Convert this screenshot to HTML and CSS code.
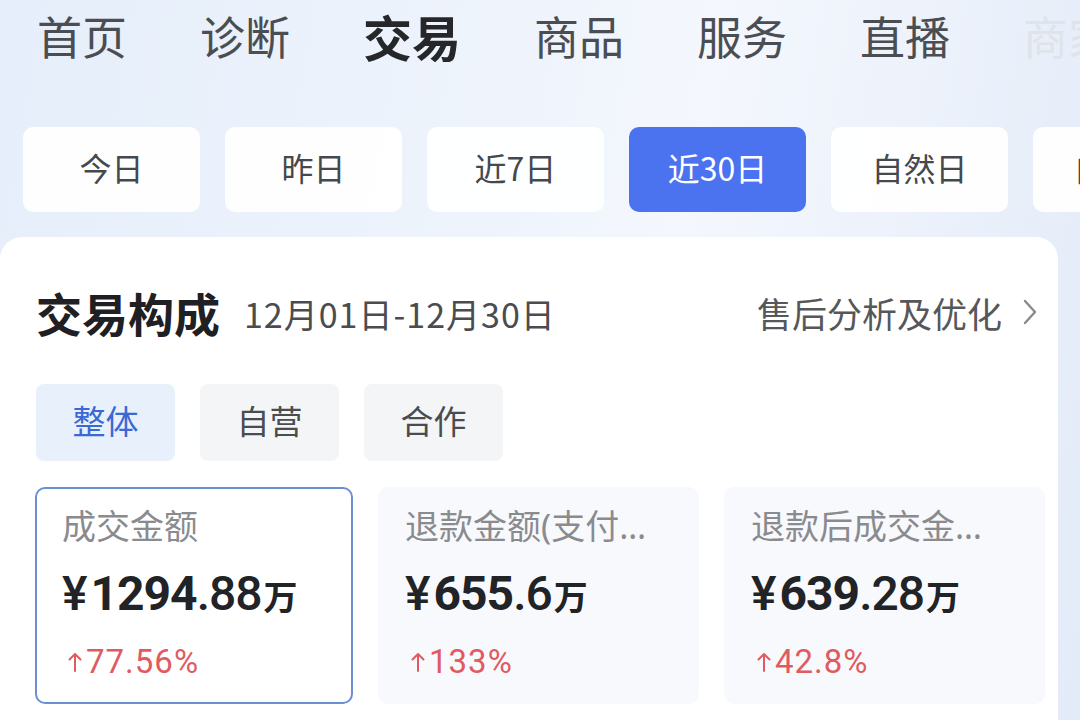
FILE: index.html
```html
<!DOCTYPE html>
<html lang="zh-CN">
<head>
    <meta charset="UTF-8">
    <meta name="viewport" content="width=device-width, initial-scale=1.0">
    <title>交易</title>
    <link rel="stylesheet" href="styles.css">
</head>
<body>
    <div class="page">
        <nav class="tabs">
            <span class="tab">首页</span>
            <span class="tab">诊断</span>
            <span class="tab active">交易</span>
            <span class="tab">商品</span>
            <span class="tab">服务</span>
            <span class="tab">直播</span>
            <span class="tab faded">商家</span>
        </nav>

        <div class="chips">
            <span class="chip">今日</span>
            <span class="chip">昨日</span>
            <span class="chip">近7日</span>
            <span class="chip selected">近30日</span>
            <span class="chip">自然日</span>
            <span class="chip">自定义</span>
        </div>

        <section class="card">
            <div class="card-header">
                <h2 class="card-title">交易构成</h2>
                <span class="card-date">12月01日-12月30日</span>
                <a class="card-link">售后分析及优化
                    <svg class="chevron" viewBox="0 0 16 28" width="16" height="28">
                        <path d="M3 3 L13 14 L3 25" fill="none" stroke="#8a8a8a" stroke-width="2.4" stroke-linecap="round" stroke-linejoin="round"/>
                    </svg>
                </a>
            </div>

            <div class="segments">
                <span class="segment current">整体</span>
                <span class="segment">自营</span>
                <span class="segment">合作</span>
            </div>

            <div class="metrics">
                <div class="metric focus">
                    <div class="metric-label">成交金额</div>
                    <div class="metric-value">¥<b>1294</b>.88<small>万</small></div>
                    <div class="metric-rate"><svg class="arrow" viewBox="0 0 14 20" width="14" height="20"><path d="M7 19 V2 M1.5 7.5 L7 2 L12.5 7.5" fill="none" stroke="#e05b61" stroke-width="2" stroke-linecap="round" stroke-linejoin="round"/></svg>77.56%</div>
                </div>
                <div class="metric">
                    <div class="metric-label">退款金额(支付时间)</div>
                    <div class="metric-value">¥<b>655</b>.6<small>万</small></div>
                    <div class="metric-rate"><svg class="arrow" viewBox="0 0 14 20" width="14" height="20"><path d="M7 19 V2 M1.5 7.5 L7 2 L12.5 7.5" fill="none" stroke="#e05b61" stroke-width="2" stroke-linecap="round" stroke-linejoin="round"/></svg>133%</div>
                </div>
                <div class="metric">
                    <div class="metric-label">退款后成交金额(支付时间)</div>
                    <div class="metric-value">¥<b>639</b>.28<small>万</small></div>
                    <div class="metric-rate"><svg class="arrow" viewBox="0 0 14 20" width="14" height="20"><path d="M7 19 V2 M1.5 7.5 L7 2 L12.5 7.5" fill="none" stroke="#e05b61" stroke-width="2" stroke-linecap="round" stroke-linejoin="round"/></svg>42.8%</div>
                </div>
            </div>
        </section>
    </div>
</body>
</html>
```

FILE: styles.css
```css
body {
    margin: 0;
    padding: 0;
    width: 1080px;
    height: 720px;
    overflow: hidden;
    font-family: "Noto Sans CJK SC", "Noto Sans", sans-serif;
    background: linear-gradient(100deg, #e5eefa 0%, #eff4fc 45%, #f4f7fd 60%, #e3ebf8 100%);
}
.page {
    width: 1080px;
    height: 720px;
    overflow: hidden;
}
.tabs {
    display: flex;
    gap: 73px;
    padding: 4px 0 0 37px;
    height: 64px;
    white-space: nowrap;
    align-items: center;
}
.tab {
    font-size: 45px;
    color: #4a4d52;
    line-height: 60px;
}
.tab.active {
    font-size: 49px;
    font-weight: 700;
    color: #25272b;
}
.tab.faded {
    color: #dfe3ea;
}
.chips {
    display: flex;
    gap: 25px;
    padding-left: 23px;
    margin-top: 59px;
}
.chip {
    flex: 0 0 177px;
    height: 85px;
    box-sizing: border-box;
    padding-bottom: 6px;
    display: flex;
    align-items: center;
    justify-content: center;
    background: rgba(255, 255, 255, 0.93);
    border-radius: 10px;
    font-size: 32px;
    color: #45484d;
}
.chip.selected {
    background: #4c73ef;
    color: #fff;
}
.card {
    margin-top: 25px;
    width: 1058px;
    height: 500px;
    background: #fff;
    border-radius: 22px 22px 0 0;
    box-sizing: border-box;
    padding: 0 12px 0 36px;
}
.card-header {
    display: flex;
    align-items: center;
    padding-top: 46px;
    height: 58px;
    padding-right: 8px;
}
.card-title {
    margin: 0;
    font-size: 46px;
    font-weight: 700;
    color: #1f2023;
}
.card-date {
    margin-left: 24px;
    font-size: 34px;
    letter-spacing: 1px;
    color: #4a4c50;
    margin-top: 2px;
}
.card-link {
    margin-left: auto;
    display: flex;
    align-items: center;
    font-size: 35px;
    color: #55575b;
}
.chevron {
    margin-left: 20px;
}
.segments {
    display: flex;
    gap: 25px;
    margin-top: 43px;
}
.segment {
    width: 139px;
    height: 77px;
    box-sizing: border-box;
    padding-bottom: 6px;
    display: flex;
    align-items: center;
    justify-content: center;
    background: #f4f5f6;
    border-radius: 8px;
    font-size: 33px;
    color: #4a4c50;
}
.segment.current {
    background: #e8f0fc;
    color: #3b69d3;
}
.metrics {
    display: flex;
    gap: 25px;
    margin-top: 26px;
    margin-left: -1px;
}
.metric {
    width: 321px;
    min-width: 0;
    flex-shrink: 0;
    height: 217px;
    box-sizing: border-box;
    padding: 14px 40px 0 25px;
    background: #f8f9fc;
    border: 2px solid transparent;
    border-radius: 10px;
}
.metric.focus {
    width: 318px;
    background: #fff;
    border-color: #6b8fd5;
}
.metric-label {
    font-family: "Noto Sans", "Noto Sans CJK SC", sans-serif;
    font-size: 34px;
    line-height: 46px;
    color: #8a8b8f;
    white-space: nowrap;
    overflow: hidden;
    text-overflow: ellipsis;
}
.metric-value {
    margin-top: 12px;
    font-family: Roboto, "Noto Sans CJK SC", sans-serif;
    font-size: 48px;
    font-weight: 500;
    line-height: 66px;
    color: #222327;
    letter-spacing: -1px;
    white-space: nowrap;
}
.metric-value b {
    font-weight: 700;
    margin-left: 4px;
}
.metric-value small {
    font-family: "Noto Sans CJK SC", sans-serif;
    font-size: 34px;
    font-weight: 700;
    margin-left: 2px;
}
.metric-rate {
    margin-top: 8px;
    display: flex;
    align-items: center;
    font-family: Roboto, "Noto Sans", sans-serif;
    font-size: 33px;
    letter-spacing: 1px;
    line-height: 50px;
    color: #e05b61;
    white-space: nowrap;
}
.arrow {
    margin: 0 4px 0 6px;
}
```
